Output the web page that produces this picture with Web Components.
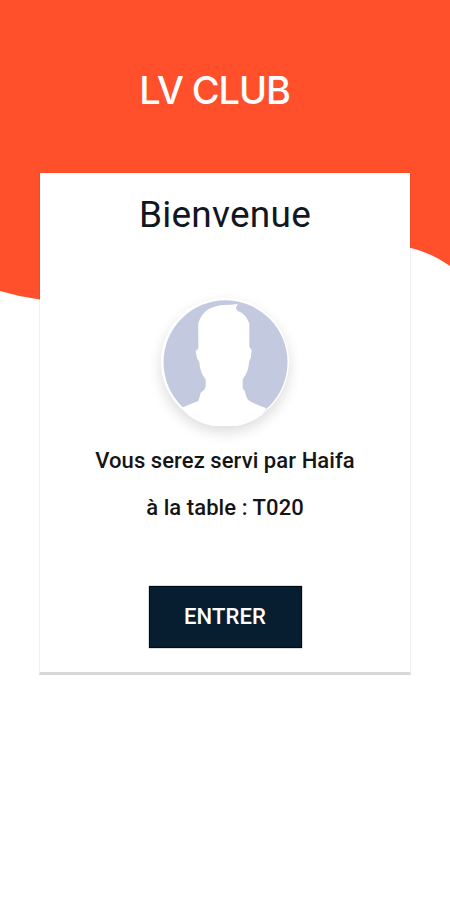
<!DOCTYPE html>
<html lang="fr"><head><meta charset="utf-8"><title>LV CLUB</title>
<style>html,body{margin:0;height:100%;background:#fff}</style></head>
<body><welcome-page></welcome-page>
<script>
const define = (name, html) => customElements.define(name, class extends HTMLElement {
  constructor() {
    super();
    this.attachShadow({ mode: 'open' }).innerHTML = html;
  }
});

define('wave-backdrop', `<style>
:host{display:block;width:450px;height:310px}
svg{display:block}
</style>
<svg width="450" height="310" viewBox="0 0 450 310"><path fill="#ff4f2b" d="M0 0H450V266Q432 253 411 248C330 232 270 312 110 308Q75 307 40 299.5Q20 297 0 291Z"/></svg>`);

define('user-avatar', `<style>
:host{display:block;width:128px;height:128px;border-radius:50%;background:#fff;box-shadow:0 6px 14px rgba(0,0,0,.14)}
svg{display:block}
</style>
<svg width="128" height="128" viewBox="2 2 128 128">
<circle cx="66.500" cy="66.300" r="62" fill="#c3cae0"/>
<path fill="#fff" d="M39.300 52.700V27.500Q42 18 49 13.500Q57 9 66 9Q73 9 78.700 8L76.700 12L78.500 14.700Q87 18 90.300 27.500V51L92.700 54L91.700 62.300L90 65.700Q90 75 83.700 83.300V92.300L85.700 94.700Q87 101 89 104Q97 109 107 112L103 119Q87 131 66 131Q44 131 29 119L23 111.500L39.300 105Q41 100 41.700 96.700L45 94L46.700 90.700V83.300Q41 77 40.300 65.700L38 62.300L36.700 55Z"/>
</svg>`);

define('enter-button', `<style>
:host{display:block}
button{display:block;box-sizing:border-box;width:153px;height:62px;margin:0;padding:0;border:1px solid #010a14;border-radius:0;background:#071e30;color:#fff;font:500 22px/60px Roboto,sans-serif;letter-spacing:.1px;box-shadow:0 0 1px #333}
</style><button><slot></slot></button>`);

define('welcome-card', `<style>
:host{display:flex;flex-direction:column;align-items:center;box-sizing:border-box;width:372px;height:502px;background:#fff;background-clip:padding-box;border:1px solid rgba(0,0,0,.06);border-top:0;border-bottom:3px solid #d8d8d8;font-family:Roboto,sans-serif;color:#151515}
h2{margin:19px 0 0;font-size:37px;line-height:46px;font-weight:400;color:#101722;letter-spacing:.25px}
user-avatar{margin-top:60px}
p{margin:0;font-size:22px;line-height:46px;font-weight:500;white-space:nowrap;letter-spacing:.08px}
.first{margin-top:12px}
.table{margin-top:1px}
enter-button{margin-top:55px}
</style>
<h2>Bienvenue</h2>
<user-avatar></user-avatar>
<p class="first">Vous serez servi par Haifa</p>
<p class="table">à la table : T020</p>
<enter-button>ENTRER</enter-button>`);

define('welcome-page', `<style>
:host{display:grid;width:450px;height:900px;overflow:hidden;background:#fff;grid-template-columns:450px;grid-template-rows:900px}
wave-backdrop,main{grid-area:1/1}
main{display:flex;flex-direction:column;align-items:center;z-index:1}
h1{margin:66px 21px 0 0;font:500 38px/48px Inter,sans-serif;color:#fff;letter-spacing:-1.100px}
welcome-card{margin-top:59px}
</style>
<wave-backdrop></wave-backdrop>
<main><h1>LV CLUB</h1><welcome-card></welcome-card></main>`);
</script></body></html>
